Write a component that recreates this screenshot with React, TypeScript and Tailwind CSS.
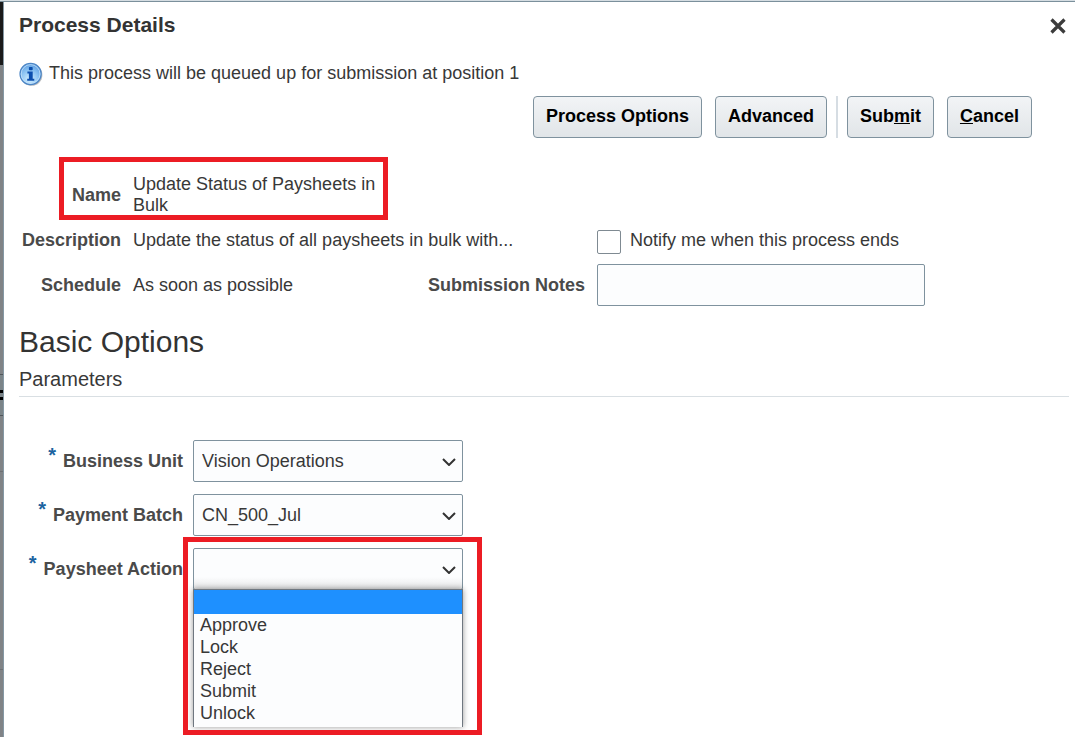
import { useState } from 'react';
import type { ReactNode, SelectHTMLAttributes } from 'react';
import { clsx } from 'clsx';

const ACTIONS = ['', 'Approve', 'Lock', 'Reject', 'Submit', 'Unlock'];

function InfoIcon() {
  return (
    <svg viewBox="0 0 24 24" className="w-6 h-6 shrink-0" aria-hidden="true">
      <defs>
        <radialGradient id="info-fill" cx="0.45" cy="0.75" r="0.75">
          <stop offset="0" stopColor="#d3efff" />
          <stop offset="0.55" stopColor="#8cc4f3" />
          <stop offset="1" stopColor="#5a9be0" />
        </radialGradient>
      </defs>
      <circle cx="12.6" cy="13" r="10.8" fill="#8d9196" opacity="0.6" />
      <circle cx="11.6" cy="12" r="10.6" fill="url(#info-fill)" stroke="#4c86c6" strokeWidth="1.2" />
      <circle cx="11.6" cy="12" r="9.4" fill="none" stroke="#c5e2fa" strokeWidth="0.8" />
      <rect x="9.9" y="5" width="3.8" height="3.2" rx="0.8" fill="#0c4fae" />
      <path d="M8.4 9.6h5.3v7.2h1.6v2H8.2v-2h1.7v-5.2H8.4z" fill="#0c4fae" />
    </svg>
  );
}

function ActionButton({ children }: { children: ReactNode }) {
  return (
    <button
      type="button"
      className="h-[42px] px-3 pb-0.5 rounded border border-[#7f929e] bg-linear-to-b from-[#f2f4f6] to-[#e1e5e8] text-lg font-bold text-black whitespace-nowrap"
    >
      {children}
    </button>
  );
}

function SelectBox({ className, children, ...props }: SelectHTMLAttributes<HTMLSelectElement>) {
  return (
    <div className="relative w-[270px]">
      <select
        {...props}
        className={clsx(
          'block w-full h-[42px] pl-2 pr-8 appearance-none rounded-xs border border-[#7f929e] bg-[#fcfdfe] text-lg text-[#383838] outline-none',
          className
        )}
      >
        {children}
      </select>
      <svg
        viewBox="0 0 14 8"
        className="absolute right-[7px] top-[18px] w-3.5 h-2 pointer-events-none"
        fill="none"
        stroke="#333"
        strokeWidth="2"
        aria-hidden="true"
      >
        <path d="M1 1l6 6 6-6" />
      </svg>
    </div>
  );
}

function RequiredLabel({ htmlFor, children }: { htmlFor: string; children: ReactNode }) {
  return (
    <label htmlFor={htmlFor} className="flex justify-end gap-[7px] text-lg font-bold text-[#4a4a4a]">
      <span className="text-xl leading-4 text-[#1c63a0]">*</span>
      {children}
    </label>
  );
}

// Dimmed edge of the page behind the dialog
function Backdrop() {
  return (
    <div className="w-1 shrink-0 bg-[#808386] border-r border-[#8598a4]" aria-hidden="true">
      <div className="h-[63px] bg-[#1a1a1a]" />
      <div className="h-[309px]" />
      <div className="h-[42px] pt-[15px] border-y border-[#50565a] bg-[#7b8488]">
        <div className="h-[10px] border-y-3 border-black" />
      </div>
      <div className="h-[56px] border-b border-[#6d7073]" />
      <div className="h-[198px] border-b border-[#6d7073]" />
    </div>
  );
}

export default function App() {
  const [unit, setUnit] = useState('Vision Operations');
  const [batch, setBatch] = useState('CN_500_Jul');
  const [action, setAction] = useState('');
  const [open, setOpen] = useState(true);

  return (
    <div className="min-h-screen flex flex-col bg-white font-['Liberation_Sans',Arial,sans-serif] text-lg text-[#383838]">
      <div className="h-0.5 bg-[#d5dde2] border-b border-[#7b909c]" />
      <div className="flex flex-1">
        <Backdrop />
        <main className="flex-1 min-w-0 pl-[15px] pr-1.5 pt-[9px]">
          <header className="flex items-center justify-between pr-[3px]">
            <h1 className="text-[21px] leading-7 font-bold text-[#333]">Process Details</h1>
            <button type="button" aria-label="Close" className="pt-0.5">
              <svg viewBox="0 0 16 16" className="w-4 h-4" stroke="#3c3c3c" strokeWidth="3.2" aria-hidden="true">
                <path d="M1.5 1.5l13 13M14.5 1.5l-13 13" />
              </svg>
            </button>
          </header>

          <div className="flex items-start gap-1.5 mt-[23px]">
            <InfoIcon />
            <p className="leading-[22px]">This process will be queued up for submission at position 1</p>
          </div>

          <div className="flex justify-end mt-2.5 pr-[37px]">
            <div className="flex gap-[13px]">
              <ActionButton>Process Options</ActionButton>
              <ActionButton>Advanced</ActionButton>
            </div>
            <div className="w-0.5 mx-[9px] bg-[#d6dde3]" />
            <div className="flex gap-[13px]">
              <ActionButton>
                Sub<u>m</u>it
              </ActionButton>
              <ActionButton>
                <u>C</u>ancel
              </ActionButton>
            </div>
          </div>

          <section className="relative grid grid-cols-[102px_248px_192px_328px] auto-rows-[45px] items-center gap-x-3 mt-[34px]">
            <div className="absolute left-10 -top-[15px] w-[329px] h-[63px] border-5 border-[#ec1c24] pointer-events-none" />
            <span className="text-right font-bold text-[#4a4a4a]">Name</span>
            <span className="col-span-3 w-[248px] leading-[21px]">Update Status of Paysheets in Bulk</span>

            <span className="text-right font-bold text-[#4a4a4a]">Description</span>
            <span className="col-span-2">Update the status of all paysheets in bulk with...</span>
            <label className="flex items-center gap-[9px]">
              <input
                type="checkbox"
                className="appearance-none w-6 h-6 mt-1 rounded-xs border border-[#7f8a92] bg-white checked:bg-[#1e90ff]"
              />
              Notify me when this process ends
            </label>

            <span className="text-right font-bold text-[#4a4a4a]">Schedule</span>
            <span>As soon as possible</span>
            <label htmlFor="notes" className="text-right font-bold text-[#4a4a4a]">
              Submission Notes
            </label>
            <input
              id="notes"
              type="text"
              className="h-[42px] px-2 rounded-xs border border-[#7f929e] bg-[#fcfdfe] outline-none"
            />
          </section>

          <h2 className="mt-[17px] text-3xl text-[#333]">Basic Options</h2>
          <h3 className="mt-[5px] pb-[3px] text-xl border-b border-[#d9dfe3]">Parameters</h3>

          <form className="grid grid-cols-[164px_270px] items-center gap-x-2.5 gap-y-3 mt-[43px]">
            <RequiredLabel htmlFor="unit">Business Unit</RequiredLabel>
            <SelectBox id="unit" value={unit} onChange={(e) => setUnit(e.target.value)}>
              <option>Vision Operations</option>
            </SelectBox>

            <RequiredLabel htmlFor="batch">Payment Batch</RequiredLabel>
            <SelectBox id="batch" value={batch} onChange={(e) => setBatch(e.target.value)}>
              <option>CN_500_Jul</option>
            </SelectBox>

            <RequiredLabel htmlFor="action">Paysheet Action</RequiredLabel>
            <div className="relative">
              <SelectBox
                id="action"
                value={action}
                onChange={(e) => setAction(e.target.value)}
                className="bg-linear-to-b from-[#fcfdfe] from-70% to-[#e6e7e8]"
              >
                {ACTIONS.map((name) => (
                  <option key={name}>{name}</option>
                ))}
              </SelectBox>
              {open && (
                <ul
                  role="listbox"
                  aria-label="Paysheet Action"
                  className="absolute left-0 top-[41px] w-full h-[138px] border-x border-t border-[#6f7780] bg-[#fcfdfe] shadow-[0_0_6px_rgba(0,0,0,0.4)]"
                >
                  {ACTIONS.map((name) => (
                    <li
                      key={name}
                      role="option"
                      aria-selected={name === action}
                      onClick={() => {
                        setAction(name);
                        setOpen(false);
                      }}
                      className={clsx('px-1.5 leading-[22px]', name === action ? 'h-6 bg-[#1e90ff]' : 'h-[22px]')}
                    >
                      {name}
                    </li>
                  ))}
                </ul>
              )}
              <div className="absolute -left-2.5 -top-[11px] w-[299px] h-[198px] border-5 border-[#ec1c24] pointer-events-none" />
            </div>
          </form>
        </main>
      </div>
    </div>
  );
}
